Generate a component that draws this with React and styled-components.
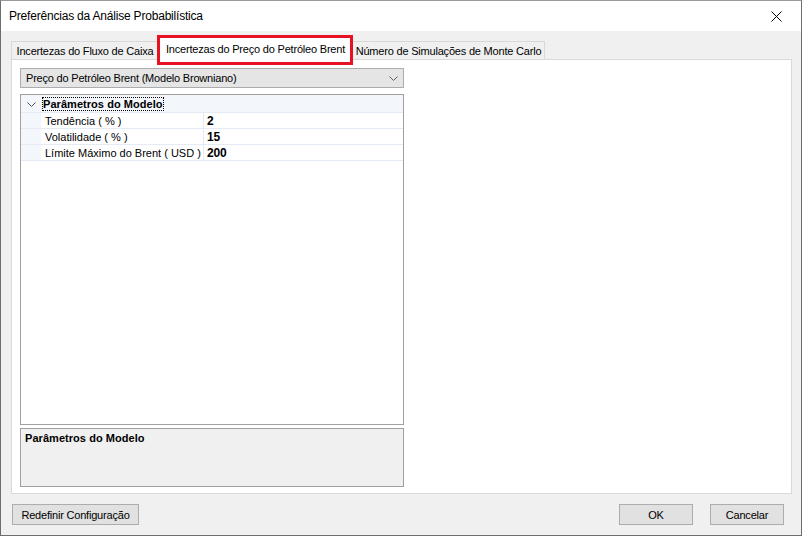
import styled, { createGlobalStyle } from 'styled-components';

const GlobalStyle = createGlobalStyle`
  html, body {
    margin: 0;
    padding: 0;
    background: #f0f0f0;
  }
  * {
    box-sizing: border-box;
  }
`;

const Window = styled.div`
  width: 802px;
  height: 536px;
  display: flex;
  flex-direction: column;
  background: #f0f0f0;
  border: 1px solid #6d6d6d;
  border-top-color: #9a9a9a;
  font-family: 'Liberation Sans', Arial, sans-serif;
  font-size: 11px;
  letter-spacing: -0.2px;
  color: #000;
`;

const TitleBar = styled.div`
  height: 30px;
  flex: none;
  display: flex;
  align-items: center;
  justify-content: space-between;
  background: #fff;
  padding: 0 0 0 8px;
`;

const Title = styled.span`
  font-size: 12px;
  letter-spacing: -0.2px;
`;

const CloseBtn = styled.div`
  width: 46px;
  height: 30px;
  display: flex;
  align-items: center;
  justify-content: center;
  margin-right: 2px;
`;

const Body = styled.div`
  flex: 1;
  display: flex;
  flex-direction: column;
  padding: 5px 9px 0 10px;
`;

const TabStrip = styled.div`
  display: flex;
  align-items: flex-end;
  height: 24px;
  position: relative;
  z-index: 1;
`;

const Tab = styled.div`
  width: ${(p) => p.$w}px;
  height: ${(p) => (p.$active ? 23 : 19)}px;
  display: flex;
  align-items: center;
  justify-content: center;
  background: ${(p) => (p.$active ? '#fff' : '#f0f0f0')};
  border: 1px solid #d9d9d9;
  border-bottom: ${(p) => (p.$active ? 'none' : '1px solid #d9d9d9')};
  margin-left: ${(p) => (p.$active ? -1 : 0)}px;
  margin-right: ${(p) => (p.$active ? -1 : 0)}px;
  padding-top: ${(p) => (p.$active ? 0 : 1)}px;
  position: relative;
  z-index: ${(p) => (p.$active ? 2 : 1)};
`;

/* red highlight drawn over the selected tab */
const Highlight = styled.div`
  position: absolute;
  top: -3px;
  left: -2px;
  right: -1px;
  bottom: -5px;
  border: 3px solid #e81123;
  pointer-events: none;
`;

const Panel = styled.div`
  height: 435px;
  margin-top: -1px;
  background: #fff;
  border: 1px solid #d9d9d9;
  padding: 8px 0 7px 8px;
  display: flex;
  flex-direction: column;
  gap: 6px;
`;

const Combo = styled.div`
  width: 384px;
  height: 20px;
  display: flex;
  align-items: center;
  justify-content: space-between;
  background: #e5e5e5;
  border: 1px solid #acacac;
  padding: 0 5px 0 5px;
  flex: none;
`;

const Grid = styled.div`
  width: 384px;
  height: 331px;
  border: 1px solid #a0a0a0;
  background: #fff;
  display: flex;
  flex-direction: column;
  flex: none;
`;

const CategoryRow = styled.div`
  height: 18px;
  padding-top: 1px;
  display: flex;
  align-items: center;
  background: #f3f6fb;
  border-bottom: 1px solid #e4ebf5;
`;

const Gutter = styled.div`
  width: 20px;
  height: 100%;
  flex: none;
  background: #f3f6fb;
  display: flex;
  align-items: center;
  justify-content: center;
`;

const CategoryLabel = styled.span`
  font-weight: bold;
  letter-spacing: 0.05px;
  padding: 0 1px;
  margin-left: 1px;
  outline: 1px dotted #000;
  outline-offset: -1px;
  line-height: 14px;
`;

const PropRow = styled.div`
  height: 16px;
  display: flex;
  align-items: stretch;
  border-bottom: 1px solid #e4ebf5;
`;

const PropName = styled.div`
  width: 163px;
  flex: none;
  padding-left: 4px;
  display: flex;
  align-items: center;
  letter-spacing: 0;
  border-right: 1px solid #e4ebf5;
`;

const PropValue = styled.div`
  flex: 1;
  padding-left: 3px;
  display: flex;
  align-items: center;
  font-weight: bold;
  font-size: 12px;
`;

const Description = styled.div`
  width: 384px;
  height: 59px;
  margin-top: -3px;
  border: 1px solid #a0a0a0;
  background: #f0f0f0;
  padding: 3px 4px;
  font-weight: bold;
  letter-spacing: 0.05px;
  flex: none;
`;

const Footer = styled.div`
  display: flex;
  align-items: center;
  padding: 10px 8px 0 1px;
`;

const Button = styled.div`
  width: ${(p) => p.$w}px;
  height: 21px;
  display: flex;
  align-items: center;
  justify-content: center;
  background: #e1e1e1;
  border: 1px solid #adadad;
  margin-left: ${(p) => p.$ml || 0}px;
`;

const Spacer = styled.div`
  flex: 1;
`;

const Chevron = ({ color = '#606060' }) => (
  <svg width="9" height="5" viewBox="0 0 9 5">
    <path d="M0.5 0.5 L4.5 4.5 L8.5 0.5" fill="none" stroke={color} strokeWidth="1" />
  </svg>
);

const rows = [
  ['Tendência ( % )', '2'],
  ['Volatilidade ( % )', '15'],
  ['Límite Máximo do Brent ( USD )', '200'],
];

export default function App() {
  return (
    <>
      <GlobalStyle />
      <Window>
        <TitleBar>
          <Title>Preferências da Análise Probabilística</Title>
          <CloseBtn>
            <svg width="11" height="11" viewBox="0 0 11 11">
              <path d="M0.5 0.5 L10.5 10.5 M10.5 0.5 L0.5 10.5" stroke="#000" strokeWidth="1" />
            </svg>
          </CloseBtn>
        </TitleBar>
        <Body>
          <TabStrip>
            <Tab $w={148}>Incertezas do Fluxo de Caixa</Tab>
            <Tab $w={195} $active>
              Incertezas do Preço do Petróleo Brent
              <Highlight />
            </Tab>
            <Tab $w={193}>Número de Simulações de Monte Carlo</Tab>
          </TabStrip>
          <Panel>
            <Combo>
              <span>Preço do Petróleo Brent (Modelo Browniano)</span>
              <Chevron />
            </Combo>
            <Grid>
              <CategoryRow>
                <Gutter>
                  <Chevron color="#505050" />
                </Gutter>
                <CategoryLabel>Parâmetros do Modelo</CategoryLabel>
              </CategoryRow>
              {rows.map(([name, value]) => (
                <PropRow key={name}>
                  <Gutter />
                  <PropName>{name}</PropName>
                  <PropValue>{value}</PropValue>
                </PropRow>
              ))}
            </Grid>
            <Description>Parâmetros do Modelo</Description>
          </Panel>
          <Footer>
            <Button $w={127}>Redefinir Configuração</Button>
            <Spacer />
            <Button $w={74}>OK</Button>
            <Button $w={74} $ml={17}>
              Cancelar
            </Button>
          </Footer>
        </Body>
      </Window>
    </>
  );
}
